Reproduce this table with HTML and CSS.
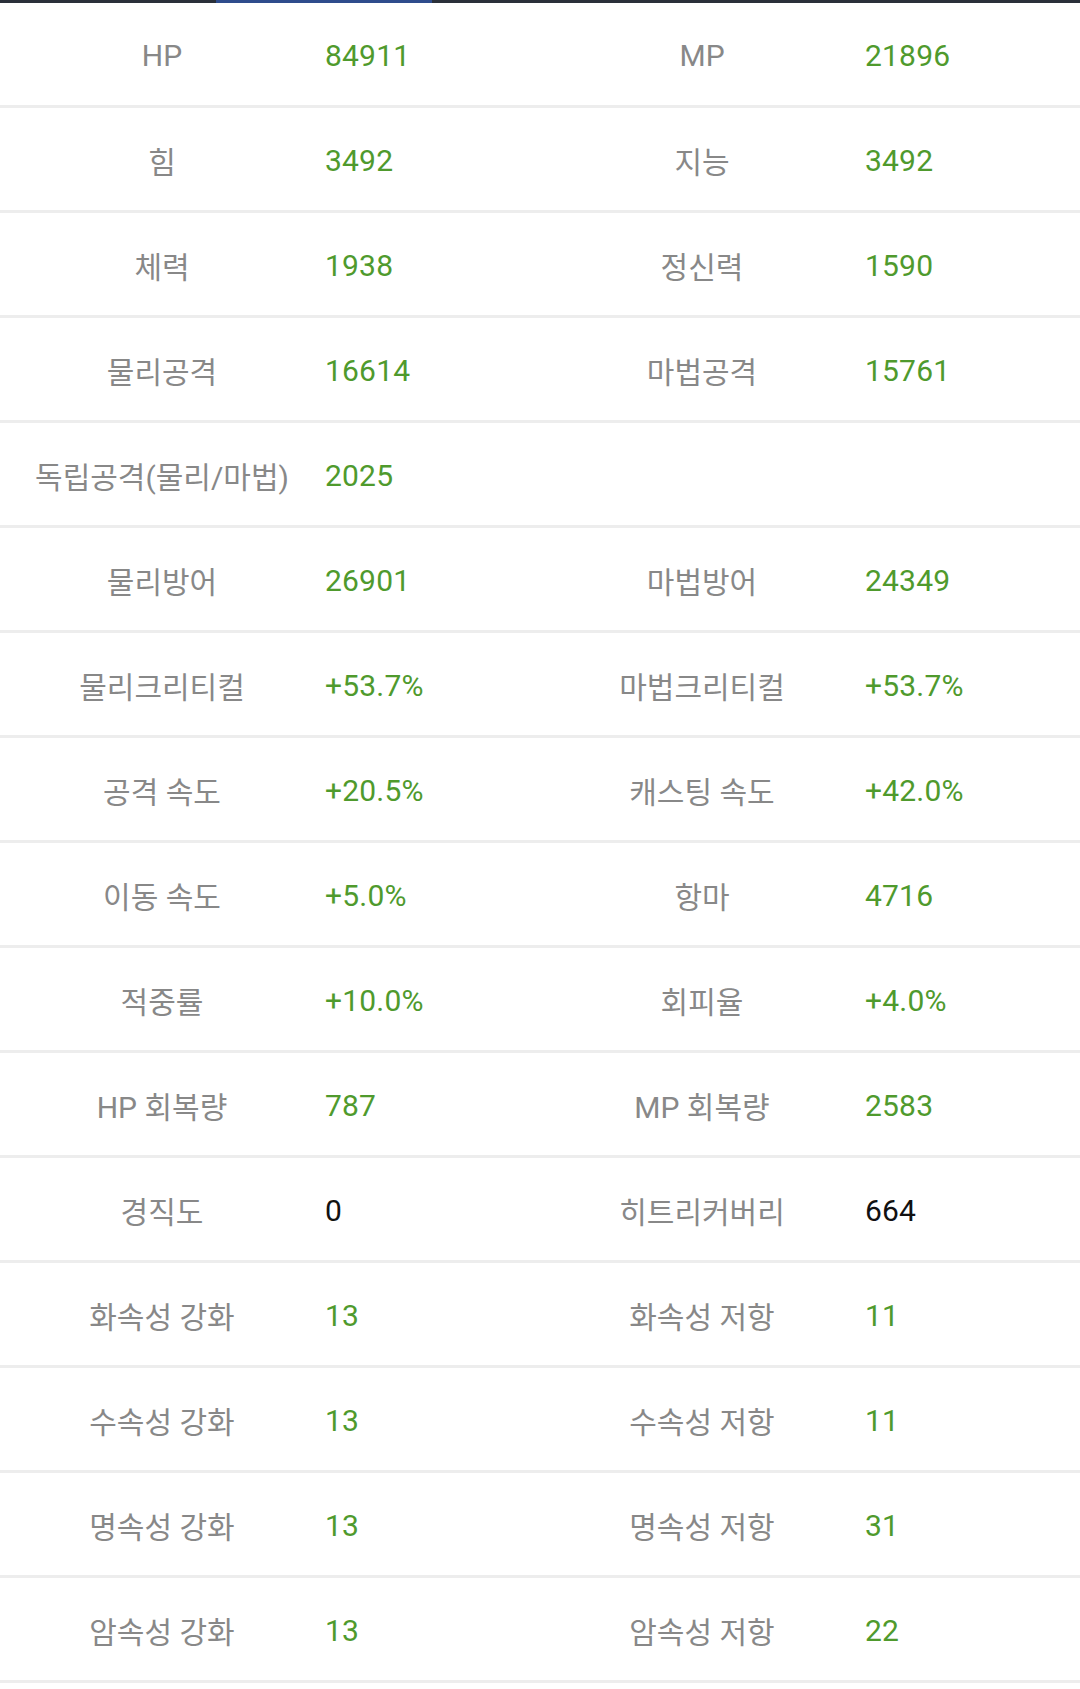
FILE: index.html
```html
<!DOCTYPE html>
<html lang="ko">
<head>
<meta charset="utf-8">
<link rel="stylesheet" href="styles.css">
</head>
<body>
<div class="tabbar">
  <div class="tab"></div>
  <div class="tab active"></div>
  <div class="tab"></div>
  <div class="tab"></div>
  <div class="tab"></div>
</div>
<div class="stats">
  <div class="row"><div class="label">HP</div><div class="val">84911</div><div class="label">MP</div><div class="val">21896</div></div>
  <div class="row"><div class="label">힘</div><div class="val">3492</div><div class="label">지능</div><div class="val">3492</div></div>
  <div class="row"><div class="label">체력</div><div class="val">1938</div><div class="label">정신력</div><div class="val">1590</div></div>
  <div class="row"><div class="label">물리공격</div><div class="val">16614</div><div class="label">마법공격</div><div class="val">15761</div></div>
  <div class="row"><div class="label">독립공격(물리/마법)</div><div class="val">2025</div><div class="label"></div><div class="val"></div></div>
  <div class="row"><div class="label">물리방어</div><div class="val">26901</div><div class="label">마법방어</div><div class="val">24349</div></div>
  <div class="row"><div class="label">물리크리티컬</div><div class="val">+53.7%</div><div class="label">마법크리티컬</div><div class="val">+53.7%</div></div>
  <div class="row"><div class="label">공격 속도</div><div class="val">+20.5%</div><div class="label">캐스팅 속도</div><div class="val">+42.0%</div></div>
  <div class="row"><div class="label">이동 속도</div><div class="val">+5.0%</div><div class="label">항마</div><div class="val">4716</div></div>
  <div class="row"><div class="label">적중률</div><div class="val">+10.0%</div><div class="label">회피율</div><div class="val">+4.0%</div></div>
  <div class="row"><div class="label">HP 회복량</div><div class="val">787</div><div class="label">MP 회복량</div><div class="val">2583</div></div>
  <div class="row"><div class="label">경직도</div><div class="val plain">0</div><div class="label">히트리커버리</div><div class="val plain">664</div></div>
  <div class="row"><div class="label">화속성 강화</div><div class="val">13</div><div class="label">화속성 저항</div><div class="val">11</div></div>
  <div class="row"><div class="label">수속성 강화</div><div class="val">13</div><div class="label">수속성 저항</div><div class="val">11</div></div>
  <div class="row"><div class="label">명속성 강화</div><div class="val">13</div><div class="label">명속성 저항</div><div class="val">31</div></div>
  <div class="row"><div class="label">암속성 강화</div><div class="val">13</div><div class="label">암속성 저항</div><div class="val">22</div></div>
</div>
</body>
</html>
```
FILE: styles.css
```css
html, body {
  margin: 0;
  padding: 0;
  background: #ffffff;
}
body {
  font-family: Roboto, "Noto Sans CJK KR", sans-serif;
  font-size: 30px;
}
.tabbar {
  display: flex;
  height: 3px;
  background: #2a303a;
}
.tab {
  flex: 1;
}
.tab.active {
  background: #2e4c8c;
}
.row {
  display: grid;
  grid-template-columns: 324px 216px 324px 216px;
  height: 100px;
  padding-top: 2px;
  align-items: center;
  border-bottom: 3px solid #ededed;
}
.label {
  text-align: center;
  color: #888888;
  white-space: nowrap;
}
.val {
  color: #4f9a2d;
  padding-left: 1px;
  letter-spacing: 0.2px;
}
.val.plain {
  color: #111111;
}
```
